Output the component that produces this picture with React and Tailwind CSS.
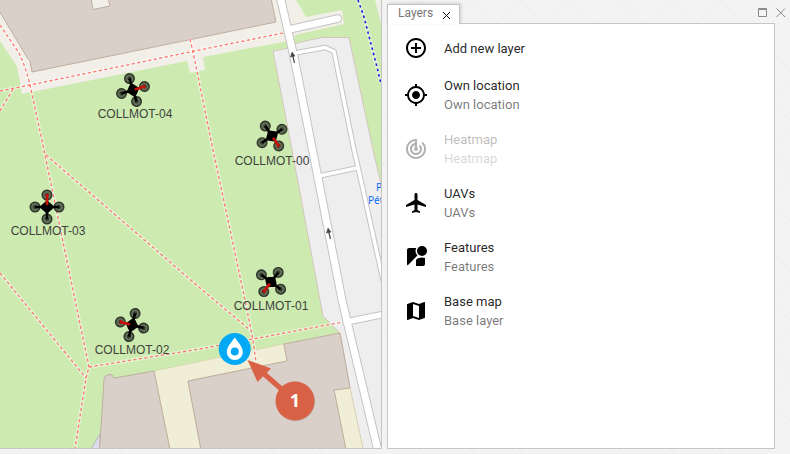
import React from 'react';
import {
  MdAddCircleOutline,
  MdMyLocation,
  MdTrackChanges,
  MdAirplanemodeActive,
  MdStreetview,
  MdMap,
} from 'react-icons/md';

const layers = [
  { title: 'Own location', type: 'Own location', Icon: MdMyLocation },
  { title: 'Heatmap', type: 'Heatmap', Icon: MdTrackChanges, disabled: true },
  { title: 'UAVs', type: 'UAVs', Icon: MdAirplanemodeActive },
  { title: 'Features', type: 'Features', Icon: MdStreetview },
  { title: 'Base map', type: 'Base layer', Icon: MdMap },
];

const drones = [
  { name: 'COLLMOT-04', x: 133, y: 90, heading: 73, labelX: 135, labelY: 118 },
  { name: 'COLLMOT-00', x: 272, y: 136, heading: 146, labelX: 272, labelY: 165 },
  { name: 'COLLMOT-03', x: 47, y: 207, heading: 0, labelX: 48, labelY: 235 },
  { name: 'COLLMOT-01', x: 271, y: 282, heading: 217, labelX: 271, labelY: 310 },
  { name: 'COLLMOT-02', x: 132, y: 325, heading: 285, labelX: 132, labelY: 354 },
];

const footways = [
  'M0 25 L19 53 Q26 68 30 85 L44 150 L75 300 L89 367 L86 378 L75 449',
  'M0 91 L30 85 L190 52 L283 33',
  'M13 89 L0 111',
  'M190 39 L193 52 L213 150 L245 300 L253 340 L256 362',
  'M46 155 L200 288 L250 330',
  'M0 273 L22 300 L86 378',
  'M89 367 L200 349 L343 322',
];

const roads = [
  { d: 'M295 53 L325 47.5 L334 51.5 L354 150 L358 167 L383 280', w: 3.5 },
  { d: 'M319 176 L357 168', w: 3.5 },
  { d: 'M346 322 L383 314.5', w: 5.5 },
  { d: 'M289 29.5 L338 18.5', w: 6.5 },
  { d: 'M280 -4 L294 57 L312.500 150 L342 300 L379 455', w: 7 },
];

function Drone({ x, y, heading }) {
  return (
    <g transform={`translate(${x} ${y}) rotate(${heading})`}>
      {[0, 90, 180, 270].map((a) => (
        <g key={a} transform={`rotate(${a})`}>
          <circle cy="-12" r="4.700" fill="#5f6f55" stroke="#30362b" strokeWidth="1.600" />
          <circle cy="-12" r="2" fill="#343b2f" />
        </g>
      ))}
      <path d="M-12 0H12M0 12V0" stroke="#000" strokeWidth="2.600" />
      <path d="M0 -7 L2.500 -4.500 L5 -2.500 L7 0 L5 2.500 L2.500 4.500 L0 7 L-2.500 4.500 L-5 2.500 L-7 0 L-5 -2.500 L-2.500 -4.500Z" fill="#000" />
      <path d="M0 -2V-12" stroke="#c8100c" strokeWidth="2.600" />
      <path d="M-2 -12H2" stroke="#c8100c" strokeWidth="1.600" />
    </g>
  );
}

function MapView() {
  return (
    <svg
      className="block h-full w-full"
      viewBox="0 0 381 448"
      preserveAspectRatio="xMinYMin slice"
      role="img"
      aria-label="Map"
    >
      <rect width="381" height="448" fill="#cdebb0" />
      <path
        d="M0 0H296L306 17L342 10L344 24L295 35L294 40L203 57L205 70L190 73L187 61L22 94L17 66L0 41Z"
        fill="#f2efe9"
      />
      <path d="M375 0H382V27Z" fill="#f2efe9" />
      <g fill="#d9d0c9" stroke="#bfae9f" strokeWidth="1">
        <path d="M-2 -2V9L28 59L30 61L32 72L276 22L271 -2H108L110 6L93 9.500L91 -2Z" />
      </g>
      <path
        d="M273 51L289 48L294 44L307 40.500L323 37.500H349L373 150L382 188V449H363L350 388L340 333L323 316L320 300L292 150Z"
        fill="#eeeeee"
        stroke="#d6c5bd"
        strokeWidth="1"
      />
      <path d="M91 449L100 434V449Z" fill="#dcdcee" stroke="#a9a9a9" strokeWidth="0.700" />
      <g fill="#f0eed7" stroke="#d8d0a8" strokeWidth="0.600">
        <path d="M154 371L284 344L287 361L188 381L201 449H170Z" />
        <path d="M334 390L350 388L363 449H346Z" />
      </g>
      <g fill="#d9d0c9" stroke="#bfae9f" strokeWidth="1">
        <path d="M99.500 450L104 379A5.500 5.500 0 0 1 114.500 378L154 371L170 450Z" />
        <path d="M188 381L287 361L284 344L340 333L350 388L334 390L346 450H201Z" />
      </g>
      <g fill="none" strokeLinejoin="round">
        {footways.map((d) => (
          <path key={d} d={d} stroke="#fff" strokeOpacity="0.450" strokeWidth="3.500" />
        ))}
        {footways.map((d) => (
          <path key={d} d={d} stroke="#fa7a70" strokeWidth="1.300" strokeDasharray="3.200 2.400" />
        ))}
        <path d="M358 0L364 17L377 67L381 83" stroke="#fff" strokeOpacity="0.400" strokeWidth="3.500" />
        <path d="M358 0L364 17L377 67L381 84" stroke="#1010ee" strokeWidth="1.500" strokeDasharray="2.500 3" />
      </g>
      <g fill="none" strokeLinecap="round" strokeLinejoin="round">
        {roads.map(({ d, w }) => (
          <path key={d} d={d} stroke="#c4c4c4" strokeWidth={w + 2} />
        ))}
        {roads.map(({ d, w }) => (
          <path key={d} d={d} stroke="#fff" strokeWidth={w} />
        ))}
      </g>
      <g stroke="#444" strokeWidth="1.200" fill="#444">
        <path d="M294.500 63L292.500 55" />
        <path d="M292 52L290.500 57L295 56Z" strokeWidth="0.500" />
        <path d="M330.500 239L328.500 231" />
        <path d="M328 228L326.500 233L331 232Z" strokeWidth="0.500" />
      </g>
      <g className="font-['Noto_Sans',sans-serif] text-[10px]" fill="#0a6cf5">
        <text x="376" y="191">P</text>
        <text x="368" y="204">Pét</text>
      </g>
      {drones.map((d) => (
        <Drone key={d.name} {...d} />
      ))}
      <g className="font-['Liberation_Sans',Arial,sans-serif] text-[12px]" fill="#3f433c" textAnchor="middle">
        {drones.map((d) => (
          <text key={d.name} x={d.labelX} y={d.labelY}>
            {d.name}
          </text>
        ))}
      </g>
      <circle cx="234.700" cy="349" r="16" fill="#03a9f4" />
      <path
        d="M234.800 337.500C237.500 341.500 242.800 346.500 242.800 352A8 8 0 0 1 226.800 352C226.800 346.500 232 341.500 234.800 337.500Z"
        fill="#fff"
      />
      <circle cx="234.800" cy="351.500" r="4" fill="#03a9f4" />
      <path d="M295 401L262 372" stroke="#d96246" strokeWidth="5" />
      <path d="M247.500 360L271 368.500L257.500 382Z" fill="#d96246" />
      <circle cx="295.500" cy="401.500" r="19.700" fill="#9b8b85" opacity="0.400" />
      <circle cx="295" cy="401" r="19.500" fill="#d96246" />
      <text
        className="font-['Open_Sans',sans-serif] text-[18px] font-bold"
        x="295"
        y="407"
        fill="#fff"
        textAnchor="middle"
      >
        1
      </text>
    </svg>
  );
}

function LayerItem({ title, type, Icon, disabled }) {
  return (
    <li>
      <button
        type="button"
        disabled={disabled}
        className="flex h-[54px] w-full items-center gap-4 px-4 text-left disabled:opacity-30"
      >
        <Icon size={24} className="shrink-0 text-black" aria-hidden="true" />
        <span className="flex flex-col">
          <span className="text-black/87">{title}</span>
          <span className="text-black/54">{type}</span>
        </span>
      </button>
    </li>
  );
}

export default function App() {
  return (
    <div className="flex h-screen gap-[5px] bg-[#f3f3f3] bg-[linear-gradient(45deg,transparent_49%,#efefef_49%,#efefef_51%,transparent_51%),linear-gradient(-45deg,transparent_49%,#efefef_49%,#efefef_51%,transparent_51%)] bg-[length:50px_50px] bg-position-[20px_0] pb-[5px] font-[Roboto,sans-serif] text-[13px] leading-[19px]">
      <main className="min-w-0 flex-1 overflow-hidden border-r border-b border-[#c6c6c6]">
        <MapView />
      </main>
      <aside className="flex w-[403px] shrink-0 flex-col">
        <header className="flex h-6 items-start justify-between pt-1 pr-1">
          <div
            role="tab"
            aria-selected="true"
            className="relative z-10 flex h-5 items-center gap-[9px] border border-b-0 border-[#c4c4c4] bg-white pr-2 pl-[10px] text-[12px] text-[#777] shadow-[1px_-1px_3px_rgba(0,0,0,0.150)]"
          >
            <span className="pb-0.5">Layers</span>
            <button type="button" aria-label="Close tab" className="flex pt-px">
              <svg width="9" height="9" viewBox="0 0 9 9" stroke="#111" strokeWidth="1">
                <path d="M1 1L8 8M8 1L1 8" />
              </svg>
            </button>
          </div>
          <div className="flex gap-2 pt-1">
            <button type="button" aria-label="Maximise">
              <svg className="block" width="10" height="10" viewBox="0 0 10 10" fill="none" stroke="#8b8b8b">
                <path d="M0.500 0.500H8.500V8.500H0.500ZM0 1.500H9" />
              </svg>
            </button>
            <button type="button" aria-label="Close panel">
              <svg className="block" width="10" height="10" viewBox="0 0 10 10" stroke="#8b8b8b">
                <path d="M0.500 0.500L9 9M9 0.500L0.500 9" />
              </svg>
            </button>
          </div>
        </header>
        <section className="-mt-px mr-[15px] min-h-0 flex-1 overflow-hidden border border-[#c6c6c6] bg-white pt-1">
          <ul>
            <li>
              <button type="button" className="flex h-10 w-full items-center gap-4 px-4 text-left">
                <MdAddCircleOutline size={24} className="shrink-0 text-black" aria-hidden="true" />
                <span className="text-black/87">Add new layer</span>
              </button>
            </li>
            {layers.map((layer) => (
              <LayerItem key={layer.title} {...layer} />
            ))}
          </ul>
        </section>
      </aside>
    </div>
  );
}
